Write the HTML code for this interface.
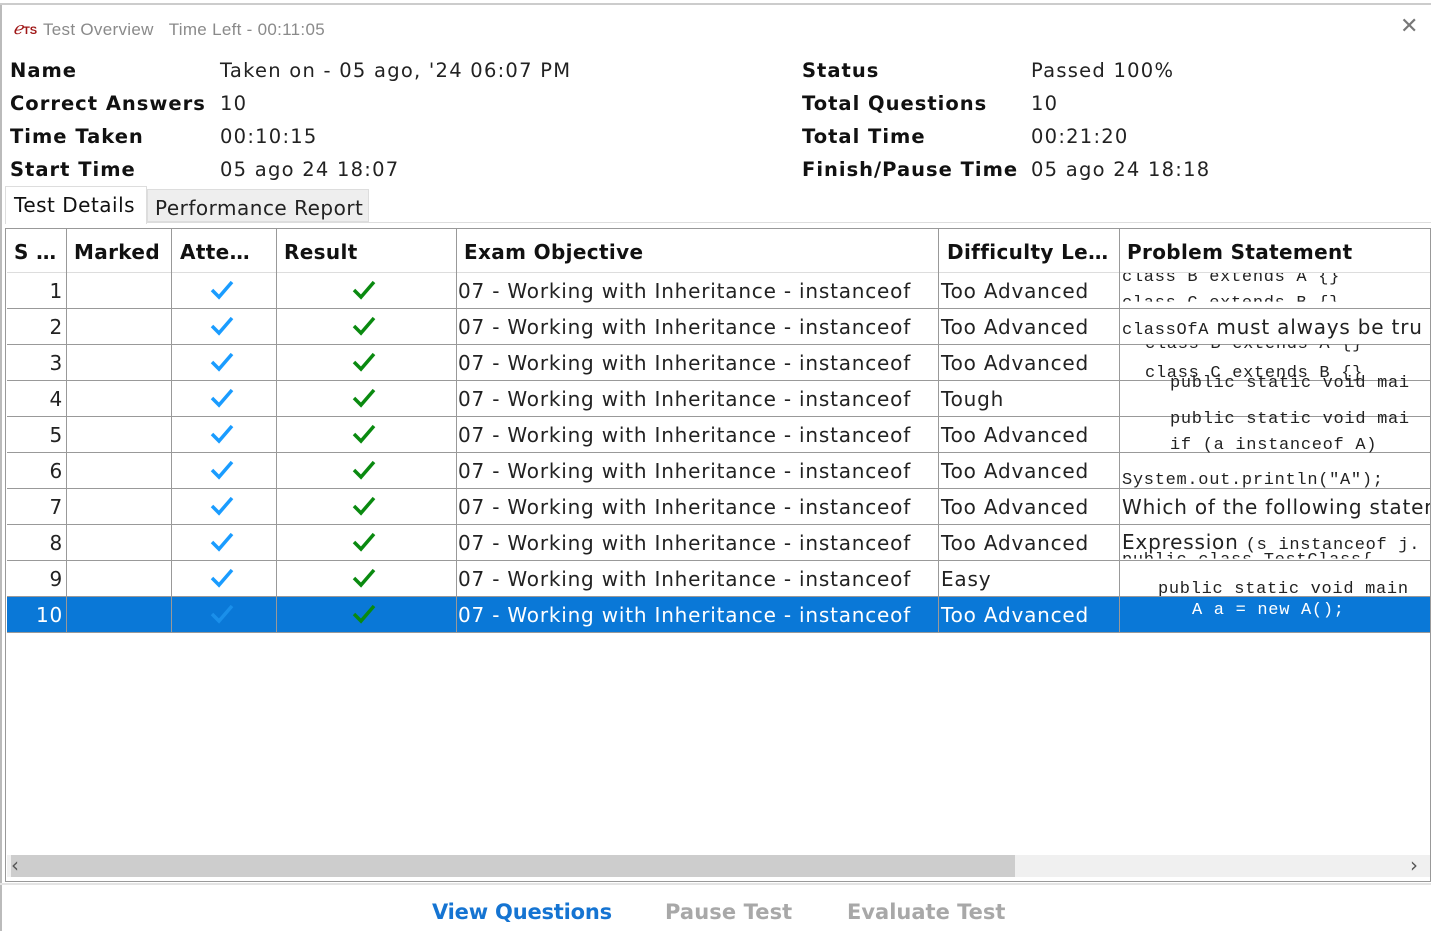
<!DOCTYPE html>
<html><head><meta charset="utf-8"><style>
*{margin:0;padding:0;box-sizing:border-box}
body{width:1431px;height:931px;background:#fff;position:relative;overflow:hidden;font-family:"DejaVu Sans","Liberation Sans",sans-serif;color:#111}
.a{position:absolute;white-space:nowrap}
.b{font-weight:bold;font-size:19.5px;letter-spacing:1px}
.v{font-size:19.5px;color:#222;letter-spacing:1.25px}
.h{font-weight:bold;font-size:20px;top:240px;letter-spacing:0.35px}
.c{font-size:20px;color:#222;letter-spacing:0.8px}
.vl{position:absolute;top:229px;width:1px;height:404px;background:#999}
.hl{position:absolute;left:7px;width:1423px;height:1px;background:#999}
.mono{font-family:"Liberation Mono","DejaVu Sans Mono",monospace;font-size:17px;color:#222;letter-spacing:0.7px}
</style></head><body>
<div class="a" style="left:0;top:3px;width:1431px;height:2px;background:#ccc"></div>
<div class="a" style="left:0;top:5px;width:2px;height:926px;background:#bbb"></div>
<div class="a" style="left:13px;top:19px;font:italic 17px 'Liberation Serif',serif;color:#a01818">ℯ<span style="font:bold 11px 'Liberation Sans',sans-serif">TS</span></div>
<div class="a" style="left:43px;top:20px;font:17px 'Liberation Sans',sans-serif;color:#8a8a8a;letter-spacing:0.3px">Test Overview &nbsp;&nbsp;Time Left - 00:11:05</div>
<div class="a" style="left:1400px;top:14px;font:22px 'DejaVu Sans',sans-serif;color:#777">✕</div>

<div class="a b" style="left:10px;top:59px">Name</div>
<div class="a b" style="left:10px;top:92px">Correct Answers</div>
<div class="a b" style="left:10px;top:125px">Time Taken</div>
<div class="a b" style="left:10px;top:158px">Start Time</div>
<div class="a v" style="left:220px;top:59px">Taken on - 05 ago, '24 06:07 PM</div>
<div class="a v" style="left:220px;top:92px">10</div>
<div class="a v" style="left:220px;top:125px">00:10:15</div>
<div class="a v" style="left:220px;top:158px">05 ago 24 18:07</div>
<div class="a b" style="left:802px;top:59px">Status</div>
<div class="a b" style="left:802px;top:92px">Total Questions</div>
<div class="a b" style="left:802px;top:125px">Total Time</div>
<div class="a b" style="left:802px;top:158px">Finish/Pause Time</div>
<div class="a v" style="left:1031px;top:59px">Passed 100%</div>
<div class="a v" style="left:1031px;top:92px">10</div>
<div class="a v" style="left:1031px;top:125px">00:21:20</div>
<div class="a v" style="left:1031px;top:158px">05 ago 24 18:18</div>

<div class="a" style="left:5px;top:186px;width:142px;height:38px;border:1px solid #ddd;border-bottom:none;background:#fff"></div>
<div class="a" style="left:14px;top:193px;font-size:20px;letter-spacing:0.5px">Test Details</div>
<div class="a" style="left:147px;top:189px;width:222px;height:33px;background:#eee;border:1px solid #ddd"></div>
<div class="a" style="left:155px;top:196px;font-size:20px;color:#222;letter-spacing:0.5px">Performance Report</div>
<div class="a" style="left:147px;top:222px;width:1284px;height:1px;background:#ddd"></div>

<div class="a" style="left:5px;top:228px;width:1426px;height:654px;border:1px solid #999"></div>
<div class="a" style="left:7px;top:596px;width:1423px;height:36px;background:#0a78d7"></div>
<div class="hl" style="top:272px;background:#ddd"></div>
<div class="hl" style="top:308px"></div><div class="hl" style="top:344px"></div><div class="hl" style="top:380px"></div><div class="hl" style="top:416px"></div><div class="hl" style="top:452px"></div><div class="hl" style="top:488px"></div><div class="hl" style="top:524px"></div><div class="hl" style="top:560px"></div><div class="hl" style="top:596px"></div><div class="hl" style="top:632px"></div>
<div class="vl" style="left:66px"></div><div class="vl" style="left:171px"></div><div class="vl" style="left:276px"></div><div class="vl" style="left:456px"></div><div class="vl" style="left:938px"></div><div class="vl" style="left:1119px"></div>

<div class="a h" style="left:14px">S …</div>
<div class="a h" style="left:74px">Marked</div>
<div class="a h" style="left:180px">Atte…</div>
<div class="a h" style="left:284px">Result</div>
<div class="a h" style="left:464px">Exam Objective</div>
<div class="a h" style="left:947px">Difficulty Le…</div>
<div class="a h" style="left:1127px">Problem Statement</div>

<div id="rows"></div>
<script>
var d=["Too Advanced","Too Advanced","Too Advanced","Tough","Too Advanced","Too Advanced","Too Advanced","Too Advanced","Easy","Too Advanced"];
var h="";
for(var i=0;i<10;i++){var t=279+36*i;var sel=i==9;var col=sel?"#fff":"#222";
h+='<div class="a c" style="left:7px;width:56px;text-align:right;top:'+t+'px;color:'+col+'">'+(i+1)+'</div>';
h+='<svg class="a" style="left:210px;top:'+(t)+'px" width="24" height="22" viewBox="0 0 24 22"><path d="M2 11 L9 18 L22 3" stroke="'+(sel?"#1a8fea":"#1a9cff")+'" stroke-width="3.5" fill="none"/></svg>';
h+='<svg class="a" style="left:352px;top:'+(t)+'px" width="24" height="22" viewBox="0 0 24 22"><path d="M2 11 L9 18 L22 3" stroke="#0a8a10" stroke-width="3.5" fill="none"/></svg>';
h+='<div class="a c" style="left:458px;top:'+t+'px;color:'+col+'">07 - Working with Inheritance - instanceof</div>';
h+='<div class="a c" style="left:941px;top:'+t+'px;color:'+col+'">'+d[i]+'</div>';}
document.getElementById("rows").innerHTML=h;
</script>
<div class="a" style="left:1120px;top:273px;width:310px;height:323px;overflow:hidden">
<div class="a mono" style="left:2px;top:-5px">class B extends A {}</div>
<div class="a mono" style="left:2px;top:21px;clip-path:inset(0 0 60% 0)">class C extends B {}</div>
<div class="a" style="left:2px;top:42px;font-size:20px;color:#222;letter-spacing:0.8px"><span class="mono">classOfA</span> must always be tru</div>
<div class="a mono" style="left:25px;top:62px;clip-path:inset(50% 0 0 0)">class B extends A {}</div>
<div class="a mono" style="left:25px;top:91px">class C extends B {}</div>
<div class="a mono" style="left:50px;top:101px">public static void mai</div>
<div class="a mono" style="left:50px;top:137px">public static void mai</div>
<div class="a mono" style="left:50px;top:163px">if (a instanceof A)</div>
<div class="a mono" style="left:2px;top:198px">System.out.println("A");</div>
<div class="a" style="left:2px;top:222px;font-size:20px;color:#222;letter-spacing:0.8px">Which of the following statem</div>
<div class="a" style="left:2px;top:257px;font-size:20px;color:#222;letter-spacing:0.8px">Expression <span class="mono">(s instanceof j.</span></div>
<div class="a mono" style="left:2px;top:278px;clip-path:inset(0 0 60% 0)">public class TestClass{</div>
<div class="a mono" style="left:38px;top:307px">public static void main</div>
</div>
<div class="a mono" style="left:1192px;top:601px;color:#fff">A a = new A();</div>

<div class="a" style="left:7px;top:855px;width:1423px;height:22px;background:#f0f0f0"></div>
<div class="a" style="left:11px;top:855px;width:1004px;height:22px;background:#cdcdcd"></div>
<div class="a" style="left:11px;top:853px;font-size:20px;color:#555">‹</div>
<div class="a" style="left:1410px;top:853px;font-size:20px;color:#555">›</div>
<div class="a" style="left:0;top:883px;width:1431px;height:2px;background:#e4e4e4"></div>

<div class="a" style="left:432px;top:900px;font-size:21px;font-weight:bold;color:#1574d2;letter-spacing:-0.2px">View Questions</div>
<div class="a" style="left:665px;top:900px;font-size:21px;font-weight:bold;color:#a8a8a8;letter-spacing:0.1px">Pause Test</div>
<div class="a" style="left:847px;top:900px;font-size:21px;font-weight:bold;color:#a8a8a8;letter-spacing:0px">Evaluate Test</div>
</body></html>
